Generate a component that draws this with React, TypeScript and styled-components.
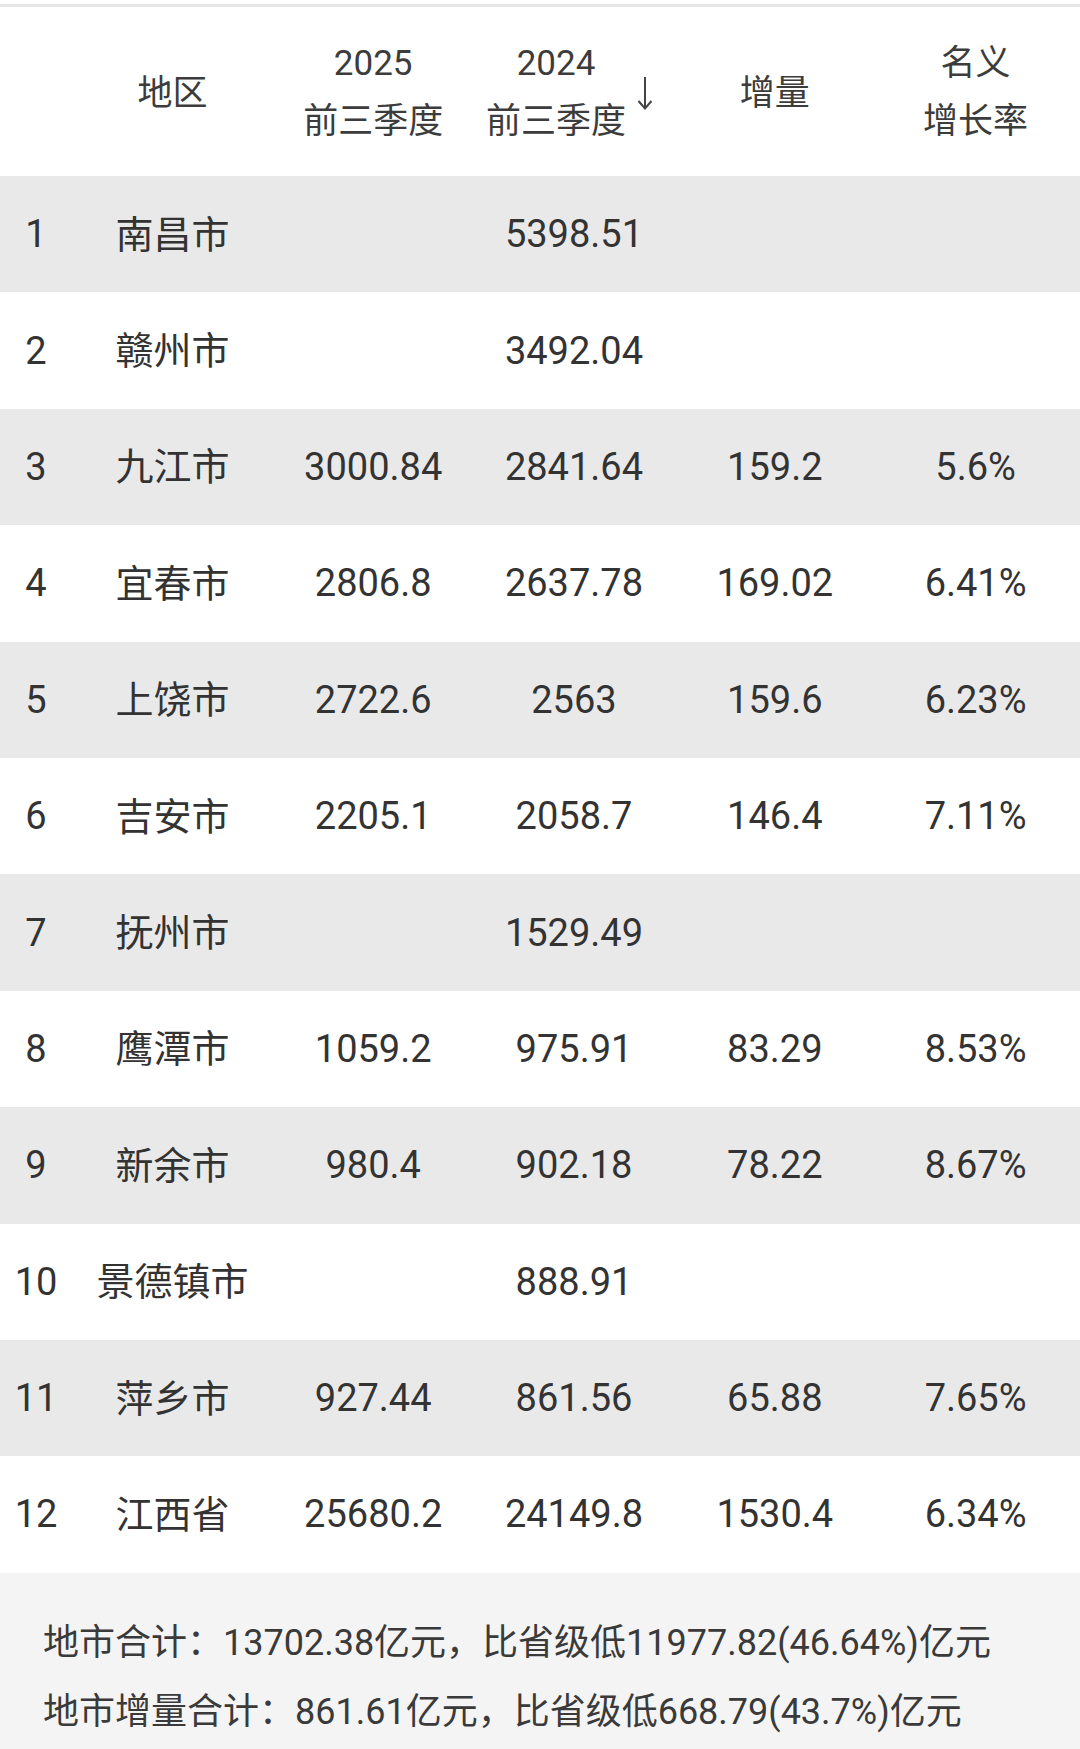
import React from "react";
import styled, { createGlobalStyle } from "styled-components";

const GlobalStyle = createGlobalStyle`
  html, body {
    margin: 0;
    padding: 0;
    background: #fff;
  }
  body {
    font-family: Roboto, "Noto Sans CJK SC", "Noto Sans", sans-serif;
    color: #333;
  }
`;

type Row = {
  rank: number;
  name: string;
  y2025: string;
  y2024: string;
  delta: string;
  rate: string;
};

const rows: Row[] = [
  { rank: 1, name: "南昌市", y2025: "", y2024: "5398.51", delta: "", rate: "" },
  { rank: 2, name: "赣州市", y2025: "", y2024: "3492.04", delta: "", rate: "" },
  { rank: 3, name: "九江市", y2025: "3000.84", y2024: "2841.64", delta: "159.2", rate: "5.6%" },
  { rank: 4, name: "宜春市", y2025: "2806.8", y2024: "2637.78", delta: "169.02", rate: "6.41%" },
  { rank: 5, name: "上饶市", y2025: "2722.6", y2024: "2563", delta: "159.6", rate: "6.23%" },
  { rank: 6, name: "吉安市", y2025: "2205.1", y2024: "2058.7", delta: "146.4", rate: "7.11%" },
  { rank: 7, name: "抚州市", y2025: "", y2024: "1529.49", delta: "", rate: "" },
  { rank: 8, name: "鹰潭市", y2025: "1059.2", y2024: "975.91", delta: "83.29", rate: "8.53%" },
  { rank: 9, name: "新余市", y2025: "980.4", y2024: "902.18", delta: "78.22", rate: "8.67%" },
  { rank: 10, name: "景德镇市", y2025: "", y2024: "888.91", delta: "", rate: "" },
  { rank: 11, name: "萍乡市", y2025: "927.44", y2024: "861.56", delta: "65.88", rate: "7.65%" },
  { rank: 12, name: "江西省", y2025: "25680.2", y2024: "24149.8", delta: "1530.4", rate: "6.34%" },
];

function SortArrow() {
  return (
    <ArrowIcon width="18" height="34" viewBox="0 0 18 34" fill="none">
      <path d="M9 1 V32" stroke="#444" strokeWidth="2" />
      <path d="M2.5 25 L9 32.5 L15.5 25" stroke="#444" strokeWidth="2" strokeLinejoin="miter" />
    </ArrowIcon>
  );
}

export default function App() {
  return (
    <>
      <GlobalStyle />
      <Page>
        <TopRule />
        <HeaderRow>
          <HeadCell />
          <HeadCell $lift>地区</HeadCell>
          <HeadCell>
            <HeadStack>
              <span>2025</span>
              <span>前三季度</span>
            </HeadStack>
          </HeadCell>
          <HeadCell $shift={8}>
            <HeadStack>
              <span>2024</span>
              <span>前三季度</span>
            </HeadStack>
            <SortArrow />
          </HeadCell>
          <HeadCell $lift>增量</HeadCell>
          <HeadCell>
            <HeadStack>
              <span>名义</span>
              <span>增长率</span>
            </HeadStack>
          </HeadCell>
        </HeaderRow>

        {rows.map((r) => (
          <BodyRow key={r.rank} $shaded={r.rank % 2 === 1}>
            <Cell>{r.rank}</Cell>
            <Cell $cjk>{r.name}</Cell>
            <Cell>{r.y2025}</Cell>
            <Cell>{r.y2024}</Cell>
            <Cell>{r.delta}</Cell>
            <Cell>{r.rate}</Cell>
          </BodyRow>
        ))}

        <Footer>
          <FooterLine>地市合计：13702.38亿元，比省级低11977.82(46.64%)亿元</FooterLine>
          <FooterLine>地市增量合计：861.61亿元，比省级低668.79(43.7%)亿元</FooterLine>
        </Footer>
      </Page>
    </>
  );
}

const Page = styled.div`
  width: 1080px;
  padding-top: 4px;
`;

const TopRule = styled.div`
  height: 3px;
  background: #e6e6e6;
`;

const Grid = styled.div`
  display: grid;
  grid-template-columns: 72px repeat(5, 1fr);
  padding-right: 4px;
`;

const HeaderRow = styled(Grid)`
  height: 169px;
  box-sizing: border-box;
  padding-top: 3px;
  background: #fff;
  color: #3c3c3c;
  font-size: 35px;
`;

const HeadCell = styled.div<{ $shift?: number; $lift?: boolean }>`
  display: flex;
  align-items: center;
  justify-content: center;
  gap: 10px;
  padding-right: ${(p) => p.$shift ?? 0}px;
  padding-bottom: ${(p) => (p.$lift ? 7 : 0)}px;
`;

const HeadStack = styled.div`
  display: flex;
  flex-direction: column;
  align-items: center;
  line-height: 58px;
`;

const ArrowIcon = styled.svg`
  display: block;
  flex-shrink: 0;
`;

const BodyRow = styled(Grid)<{ $shaded: boolean }>`
  height: 116.4px;
  background: ${(p) => (p.$shaded ? "#e9e9e9" : "#fff")};
`;

const Cell = styled.div<{ $cjk?: boolean }>`
  display: flex;
  align-items: center;
  justify-content: center;
  font-size: 38px;
  color: #333;
  white-space: nowrap;
  padding-bottom: ${(p) => (p.$cjk ? 6 : 0)}px;
`;

const Footer = styled.div`
  height: 176px;
  box-sizing: border-box;
  background: #f4f4f4;
  padding: 36px 0 0 43px;
`;

const FooterLine = styled.div`
  font-size: 36px;
  line-height: 69px;
  color: #3a3a3a;
  white-space: nowrap;
`;
